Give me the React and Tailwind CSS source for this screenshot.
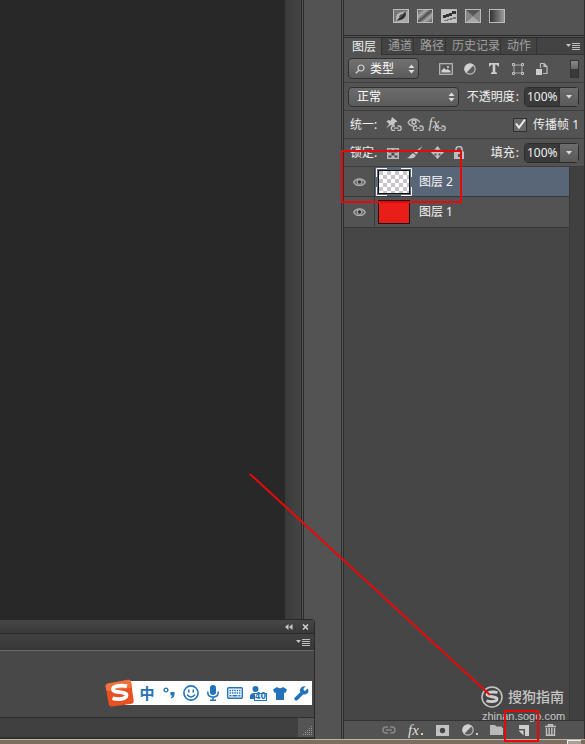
import React from "react";

const FONT = "font-['Noto_Sans','Noto_Sans_CJK_SC',sans-serif]";

function Icon({ w, h, className = "", children }) {
  return (
    <svg width={w} height={h} viewBox={`0 0 ${w} ${h}`} className={`block shrink-0 ${className}`} aria-hidden="true">
      {children}
    </svg>
  );
}

function IconButton({ label, className = "", children }) {
  return (
    <button type="button" aria-label={label} className={`flex h-5 shrink-0 items-center justify-center ${className}`}>
      {children}
    </button>
  );
}

function Updown() {
  return (
    <Icon w={7} h={10}>
      <path d="M3.5 0.5 6.5 4h-6zM3.5 9.5 6.5 6h-6z" fill="#ddd" />
    </Icon>
  );
}

function MenuIcon() {
  return (
    <Icon w={14} h={9}>
      <path d="M0 2h5L2.5 5z" fill="#c4c4c4" />
      <path d="M6 1.5h8M6 3.5h8M6 5.5h8M6 7.5h8" stroke="#bdbdbd" strokeWidth="1" />
    </Icon>
  );
}

function ChainLink() {
  return (
    <path
      d="M10 9H8.500a2.200 2.200 0 0 0 0 4.400H10M12.500 9H14a2.200 2.200 0 0 1 0 4.400h-1.500M9 11.200h4.500"
      fill="none"
      stroke="#c0c0c0"
      strokeWidth="1.300"
    />
  );
}

function HalfCircle() {
  return (
    <Icon w={12} h={12}>
      <circle cx="6" cy="6" r="5.2" fill="#5c5c5c" stroke="#bdbdbd" strokeWidth="1.2" />
      <path d="M2.100 9.900A5.500 5.500 0 0 1 9.900 2.100z" fill="#d0d0d0" />
    </Icon>
  );
}

function AdjustmentIcon({ kind }) {
  return (
    <Icon w={16} h={14}>
      <defs>
        <linearGradient id="diag" x1="0" y1="0" x2="1" y2="1">
          <stop offset="0" stopColor="#555" />
          <stop offset=".3" stopColor="#aaa" />
          <stop offset=".5" stopColor="#4c4c4c" />
          <stop offset=".7" stopColor="#aaa" />
          <stop offset="1" stopColor="#5a5a5a" />
        </linearGradient>
        <linearGradient id="flat">
          <stop offset="0" stopColor="#333" />
          <stop offset="1" stopColor="#999" />
        </linearGradient>
      </defs>
      <rect x=".5" y=".5" width="15" height="13" fill="#555" />
      {kind === "反相" && (
        <>
          <path d="M1 1h14L1 13z" fill="#777" />
          <path d="M15 1v12H1z" fill="#a8a8a8" />
          <path d="M12 2 3.500 11.500C2 7 5 3 9.500 3z" fill="#b8b8b8" />
          <path d="M3.500 11.500 12.500 3c2 4.500-3 9-9 8.500z" fill="#303030" />
          <path d="M6 8.500C6 6 8 4.800 10 5z" fill="#444" />
        </>
      )}
      {kind === "色调分离" && <rect x="1" y="1" width="14" height="12" fill="url(#diag)" />}
      {kind === "阈值" && (
        <>
          <rect x="1" y="1" width="14" height="12" fill="#c2c2c2" />
          <path d="M15 2h-4v2H8v1H5v1H2v3h3V8h3V7h3V5h4z" fill="#333" />
          <path d="M15 8h-3v1H9v1H6v1H3v1h4v-1h4v-1h4z" fill="#777" />
        </>
      )}
      {kind === "可选颜色" && (
        <>
          <path d="m1 1 7 6 7-6z" fill="#555" />
          <path d="m1 13 7-6 7 6z" fill="#a8a8a8" />
          <path d="m1 1 7 6-7 6z" fill="#858585" />
          <path d="m15 1-7 6 7 6z" fill="#858585" />
        </>
      )}
      {kind === "渐变映射" && <rect x="1" y="1" width="14" height="12" fill="url(#flat)" />}
      <rect x=".5" y=".5" width="15" height="13" fill="none" stroke="#bbb" />
    </Icon>
  );
}

function Eye() {
  return (
    <Icon w={13} h={10}>
      <path d="M.6 5.2C3 .8 10 .8 12.4 5.2 10 9.6 3 9.6.6 5.2z" fill="#6a6a6a" stroke="#b2b2b2" strokeWidth="1.2" />
      <circle cx="6.5" cy="4.8" r="2.8" fill="#aaa" />
      <circle cx="6.5" cy="5" r="1.7" fill="#333" />
    </Icon>
  );
}

function PercentField({ id, label }) {
  return (
    <div className="flex items-center text-[#eee]">
      <label htmlFor={id} className="mr-[2px] whitespace-nowrap">
        {label}<span className="ml-px mr-[3px]">:</span>
      </label>
      <div className="flex h-5 w-[55px] rounded-sm border border-[#2b2b2b]">
        <input id={id} defaultValue="100%" className="w-[34px] min-w-0 bg-[#3a3a3a] pl-[2px] text-[12px] text-[#eee] outline-none" />
        <button type="button" aria-label={`${label}选项`} className="flex flex-1 items-center justify-center border-l border-[#333] bg-linear-to-b from-[#6c6c6c] to-[#5a5a5a]">
          <Icon w={7} h={4}><path d="M0 0h6L3 3.5z" fill="#ddd" /></Icon>
        </button>
      </div>
    </div>
  );
}

function LayerRow({ name, selected, children }) {
  return (
    <li className={`flex border-b border-[#383838] ${selected ? "h-[30px] bg-[#596678]" : "h-[31px] bg-[#535353]"}`}>
      <button type="button" aria-label={`切换${name}可见性`} className="flex w-[31px] items-center justify-center border-r border-[#3b3b3b] bg-[#535353]">
        <Eye />
      </button>
      <div className="ml-px flex items-center">{children}</div>
      <button type="button" className="ml-[7px] flex-1 text-left text-[#f5f5f5]">{name}</button>
    </li>
  );
}

const row = "flex h-7 shrink-0 items-center border-b border-[#3d3d3d] pl-1 pr-[5px]";

function LayersPanel() {
  return (
    <aside className="flex w-[244px] shrink-0 flex-col border-r border-[#2f2f2f] border-l-3 [border-left-style:double] bg-[#535353]">
      <div className="flex h-[38px] shrink-0 gap-2 border-b-3 border-double border-[#2b2b2b] pl-[49px] pt-[9px]">
        {["反相", "色调分离", "阈值", "可选颜色", "渐变映射"].map((k) => (
          <button key={k} type="button" aria-label={k} className="h-[14px]"><AdjustmentIcon kind={k} /></button>
        ))}
      </div>

      <div role="tablist" className="flex h-[17px] shrink-0 items-stretch bg-[#434343] text-left text-[#a0a0a0]">
        <button role="tab" aria-selected="true" className="w-[38px] border-r border-[#303030] bg-[#535353] pl-2 text-left text-[#eee]">图层</button>
        <button role="tab" aria-selected="false" className="w-[32px] border-b border-r border-[#333] pl-[6px] text-left">通道</button>
        <button role="tab" aria-selected="false" className="w-8 border-b border-r border-[#333] pl-[6px] text-left">路径</button>
        <button role="tab" aria-selected="false" className="w-[55px] border-b border-r border-[#333] pl-[6px] text-left">历史记录</button>
        <button role="tab" aria-selected="false" className="w-9 border-b border-r border-[#333] pl-[6px] text-left">动作</button>
        <button type="button" aria-label="面板菜单" className="flex flex-1 items-center justify-end border-b border-[#333] pr-1"><MenuIcon /></button>
      </div>

      <div className={row}>
        <div className="relative flex h-[21px] w-[71px] items-center rounded-sm border border-[#303030] bg-linear-to-b from-[#727272] to-[#5b5b5b]">
          <select aria-label="滤镜类型" className="h-full w-full appearance-none bg-transparent pl-[21px] text-[12px] text-white outline-none">
            <option>类型</option>
          </select>
          <span className="pointer-events-none absolute left-[6px]">
            <Icon w={10} h={10}>
              <circle cx="6" cy="4" r="3" fill="none" stroke="#d0d0d0" strokeWidth="1.2" />
              <path d="M4 6.3.8 9.3" stroke="#d0d0d0" strokeWidth="1.5" />
            </Icon>
          </span>
          <span className="pointer-events-none absolute right-[3px]"><Updown /></span>
        </div>
        <div className="ml-[15px] flex items-center">
          <IconButton label="像素图层" className="w-6">
            <Icon w={14} h={12}>
              <rect x=".7" y=".7" width="12.6" height="10.6" fill="#555" stroke="#bbb" strokeWidth="1.2" />
              <path d="M2.5 9.5V7.5L5 5l2 2 1.5-1 3 2v1.5z" fill="#d5d5d5" />
              <rect x="8" y="3" width="2" height="2" fill="#bbb" />
            </Icon>
          </IconButton>
          <IconButton label="调整图层" className="w-6"><HalfCircle /></IconButton>
          <IconButton label="文字图层" className="w-6">
            <Icon w={10} h={11}><path d="M0 0h10v3.5H9Q8.700 1.500 6.300 1.500V9l1.700.7V11H2V9.700L3.700 9V1.500Q1.300 1.500 1 3.500H0z" fill="#ccc" /></Icon>
          </IconButton>
          <IconButton label="形状图层" className="w-6">
            <Icon w={12} h={12}>
              <path d="M2 2h8v8H2z" fill="none" stroke="#aaa" />
              <path d="M.5.5h2v2h-2zM9.500.5h2v2h-2zM.5 9.500h2v2h-2zM9.500 9.500h2v2h-2z" fill="#535353" stroke="#c5c5c5" />
            </Icon>
          </IconButton>
          <IconButton label="智能对象" className="w-6">
            <Icon w={12} h={12}>
              <path d="M4.500 5V.5H8L11 3.500v7H7M8 .5v3h3" fill="none" stroke="#bbb" strokeWidth="1.200" />
              <rect x="0" y="6" width="6" height="6" fill="#ccc" />
            </Icon>
          </IconButton>
        </div>
        <button type="button" aria-label="启用滤镜" className="ml-auto h-[18px] w-[9px] border border-[#333] bg-[#3a3a3a]">
          <span className="-mt-2 block h-2 bg-linear-to-b from-[#8a8a8a] to-[#666]" />
        </button>
      </div>

      <div className={`${row} justify-between`}>
        <div className="relative flex h-5 w-[111px] items-center rounded-sm border border-[#303030] bg-linear-to-b from-[#6c6c6c] to-[#5b5b5b]">
          <select aria-label="混合模式" className="h-full w-full appearance-none bg-transparent pl-2 text-[12px] text-white outline-none">
            <option>正常</option>
          </select>
          <span className="pointer-events-none absolute right-[3px]"><Updown /></span>
        </div>
        <PercentField id="opacity" label="不透明度" />
      </div>

      <div className={`${row} text-[#eee]`}>
        <span className="w-[34px] pl-[2px]">统一:</span>
        <IconButton label="统一图层位置" className="w-[22px]">
          <Icon w={17} h={15}>
            <path d="m7 0 5.500 4.500-2 .8L9.200 7 9 8.500H7L5.500 8 1 11.500 4.200 7 1.500 4.500 3 3.200l3 .3z" fill="#c6c6c6" />
            <ChainLink />
          </Icon>
        </IconButton>
        <IconButton label="统一图层可见性" className="w-[22px]">
          <Icon w={17} h={15}>
            <path d="M1 5.500C4 .8 10 .8 13 5.500M1 5.500C2 7.500 4 8.800 6 9" fill="none" stroke="#bdbdbd" strokeWidth="1.300" />
            <circle cx="7" cy="5" r="2.700" fill="#bbb" /><circle cx="7" cy="5" r="1.100" fill="#444" />
            <ChainLink />
          </Icon>
        </IconButton>
        <IconButton label="统一图层样式" className="w-[22px]">
          <span className="relative h-[15px] w-[17px]">
            <span className="absolute left-0 top-0 font-['Liberation_Serif',serif] text-[15px] italic leading-3 text-[#d0d0d0]">fx</span>
            <span className="absolute left-0 top-0"><Icon w={17} h={15}><ChainLink /></Icon></span>
          </span>
        </IconButton>
        <label className="ml-auto flex items-center gap-[6px]">
          <span className="relative h-[14px] w-[14px]">
            <input type="checkbox" defaultChecked className="block h-[14px] w-[14px] appearance-none border border-[#303030] bg-[#686868]" />
            <span className="pointer-events-none absolute left-[1px] top-0"><Icon w={13} h={12}><path d="m2 5.500 3 4L11 1.500" fill="none" stroke="#eee" strokeWidth="2" /></Icon></span>
          </span>
          <span className="whitespace-nowrap">传播帧 1</span>
        </label>
      </div>

      <div className={`${row} text-[#eee]`}>
        <span className="w-[34px] pl-[2px]">锁定:</span>
        <IconButton label="锁定透明像素" className="w-[22px]">
          <Icon w={12} h={12}>
            <path d="M0 1h12v11H0z" fill="#b8b8b8" />
            <path d="M1.500 2.500h3v3h-3zM7.500 2.500h3v3h-3zM4.500 5.500h3v3h-3zM1.500 8.500h3v2h-3zM7.500 8.500h3v2h-3z" fill="#484848" />
          </Icon>
        </IconButton>
        <IconButton label="锁定图像像素" className="w-[22px]">
          <Icon w={16} h={13}><path d="M15.500 0 9.500 8.500 7 6.500zM6.300 7.300l2.500 2C8 12.500 4 13 0 12c3-.5 3.500-4.500 6.300-4.700z" fill="#c4c4c4" /></Icon>
        </IconButton>
        <IconButton label="锁定位置" className="w-[22px]">
          <Icon w={13} h={13}><path d="m6.500 0 3 3.500h-2v2h2v-2L13 6.500l-3.500 3v-2h-2v2h2l-3 3.500-3-3.500h2v-2h-2v2L0 6.500l3.500-3v2h2v-2h-2z" fill="#c2c2c2" /></Icon>
        </IconButton>
        <IconButton label="锁定全部" className="w-[22px]">
          <Icon w={10} h={13}>
            <path d="M2 6V3.500a3 3 0 0 1 6 0V6" fill="none" stroke="#bdbdbd" strokeWidth="1.700" />
            <path d="M0 5.500h10V13H0z" fill="#bdbdbd" /><path d="M4 8h2v3H4z" fill="#555" />
          </Icon>
        </IconButton>
        <div className="ml-auto"><PercentField id="fill" label="填充" /></div>
      </div>

      <div className="flex min-h-0 flex-1 bg-[#464646]">
        <ul className="flex-1">
          <LayerRow name="图层 2" selected>
            <Icon w={36} h={28}>
              <defs>
                <pattern id="checker" width="8" height="8" patternUnits="userSpaceOnUse" x="3" y="3">
                  <rect width="8" height="8" fill="#fff" />
                  <path d="M0 0h4v4H0zM4 4h4v4H4z" fill="#c9c5cb" />
                </pattern>
              </defs>
              <rect x="2.500" y="2.500" width="31" height="23" fill="url(#checker)" stroke="#141414" />
              <path d="M.5 9V.5H11M25 .5h10.500V9M35.500 19v8.500H25M11 27.500H.5V19" fill="none" stroke="#fff" strokeWidth="1" />
            </Icon>
          </LayerRow>
          <LayerRow name="图层 1">
            <span className="mx-[2px] h-6 w-8 border border-[#151515] bg-[#e91e18]" />
          </LayerRow>
        </ul>
        <div className="w-[15px] border-l border-[#383838] bg-[#404040]" />
      </div>

      <div className="flex h-[19px] shrink-0 items-center border-t border-[#333] bg-[#535353] pl-[31px]">
        <IconButton label="链接图层" className="w-[27px]">
          <Icon w={14} h={8}><path d="M6 1H4a3 3 0 0 0 0 6h2M8 1h2a3 3 0 0 1 0 6H8M4 4h6" fill="none" stroke="#888" strokeWidth="1.500" /></Icon>
        </IconButton>
        <IconButton label="图层样式" className="w-[27px]">
          <span className="font-['Liberation_Serif',serif] text-[15px] italic leading-4 text-[#ddd]">fx</span>
          <span className="ml-[2px] mt-2 h-[2px] w-[2px] bg-[#ccc]" />
        </IconButton>
        <IconButton label="添加蒙版" className="w-[27px]">
          <Icon w={13} h={11}><path d="M0 0h13v11H0z" fill="#c2c2c2" /><circle cx="6.500" cy="5.500" r="2.700" fill="#444" /></Icon>
        </IconButton>
        <IconButton label="新建调整图层" className="w-[27px]">
          <HalfCircle /><span className="ml-[2px] mt-2 h-[2px] w-[2px] bg-[#ccc]" />
        </IconButton>
        <IconButton label="新建组" className="w-[27px]">
          <Icon w={13} h={10}><path d="M0 0h5l1.500 1.500H12V3H0zM0 3h13v7H0z" fill="#b9b9b9" /></Icon>
        </IconButton>
        <IconButton label="新建图层" className="w-[27px]">
          <Icon w={11} h={11}><path d="M1 0h10v11H7V4H1z" fill="#ccc" /><path d="M.5 5.500h5V10.500z" fill="#d0d0d0" /></Icon>
        </IconButton>
        <IconButton label="删除图层" className="w-[27px]">
          <Icon w={11} h={12}>
            <path d="M0 2.500h11M3.500 2V.7h4V2" fill="none" stroke="#c2c2c2" strokeWidth="1.400" />
            <path d="M1.500 4v7.300h8V4M4.200 4v7M6.800 4v7" fill="none" stroke="#c2c2c2" strokeWidth="1.400" />
          </Icon>
        </IconButton>
      </div>
    </aside>
  );
}

function InputMethodBar() {
  return (
    <div className="flex h-7 items-center">
      <Icon w={29} h={28} className="z-10 -mr-[9px]">
        <path d="M3 4.500 23 .7q2.500-.4 3 2l2.700 19q.3 2.500-2 3L7 27.500q-2.500.5-3.200-2L.7 8Q0 5 3 4.500z" fill="#e95022" />
        <path d="M3 4.500 23 .7q2.500-.4 3 2l.8 6L1.500 12 .7 8Q0 5 3 4.500z" fill="#f0713a" />
        <path d="M22 7.300c-5-1.300-14-.8-14 3 0 4.200 13.500 1.500 13.500 6 0 4-9 4.500-14 3" fill="none" stroke="#fff" strokeWidth="3.800" />
      </Icon>
      <div className="flex h-6 w-[187px] items-center bg-white pl-[11px] text-[#2273b9]">
        <IconButton label="中文输入" className="w-[22px]">
          <span className="font-['Noto_Sans_CJK_SC',sans-serif] text-[15px] font-bold leading-5">中</span>
        </IconButton>
        <IconButton label="标点" className="w-[22px]">
          <Icon w={12} h={12}><circle cx="3" cy="3" r="1.900" fill="none" stroke="#2273b9" strokeWidth="1.400" /><path d="M7.500 5h4v2.500Q11 11 8 11.500V10q1.200-.5 1.400-1.500H7.500z" fill="#2273b9" /></Icon>
        </IconButton>
        <IconButton label="表情" className="w-[22px]">
          <Icon w={16} h={16}><circle cx="8" cy="8" r="7.100" fill="none" stroke="#2273b9" strokeWidth="1.600" /><path d="M5 4.500v3h1.500v-3zM9.500 4.500v3H11v-3z" fill="#2273b9" /><path d="M4 9.500q4 5 8 0" fill="none" stroke="#2273b9" strokeWidth="1.400" /></Icon>
        </IconButton>
        <IconButton label="语音" className="w-[22px]">
          <Icon w={12} h={16}><rect x="3" y="0" width="6" height="10" rx="3" fill="#2273b9" /><path d="M.8 6.500v1q0 4.500 5.200 4.500t5.200-4.500v-1M6 12v3M3 15.200h6" fill="none" stroke="#2273b9" strokeWidth="1.500" /></Icon>
        </IconButton>
        <IconButton label="软键盘" className="w-[22px]">
          <Icon w={16} h={12}><rect x=".7" y=".7" width="14.6" height="10.6" rx="1" fill="#fff" stroke="#2273b9" strokeWidth="1.400" /><path d="M2.500 3.500h11M2.500 6h11" stroke="#2273b9" strokeWidth="1.500" strokeDasharray="1.500 .9" /><path d="M2.500 8.700h2M5.500 8.700h5M11.500 8.700h2" stroke="#2273b9" strokeWidth="1.500" /></Icon>
        </IconButton>
        <IconButton label="账户等级" className="w-[24px]">
          <span className="relative h-4 w-[18px]">
            <Icon w={18} h={16}><circle cx="6.500" cy="4" r="3" fill="#2273b9" /><path d="M1 14V11q0-3 5-3 4 0 5 2v4z" fill="#2273b9" /></Icon>
            <span className="absolute bottom-0 right-0 h-2 w-[13px] border border-[#2273b9] bg-white text-center font-['DejaVu_Sans',sans-serif] text-[8px] font-bold leading-[6px]">40</span>
          </span>
        </IconButton>
        <IconButton label="皮肤" className="w-[20px]">
          <Icon w={14} h={14}><path d="M4 1q3 2.500 6 0l4 2.500L12.500 7 11 6.500V14H3V6.500L1.500 7 0 3.500z" fill="#2273b9" /></Icon>
        </IconButton>
        <IconButton label="工具箱" className="w-[22px]">
          <Icon w={15} h={15}><path d="M13.300 2.500 11 5 9.500 4 9.800 2l2-1.500Q8.500-.5 6.800 2T6.500 6L.8 11.500q-1 1.500 0 2.500t2.500.2L9.200 8.500Q12 9 13.700 7t-.4-4.500z" fill="#2273b9" /></Icon>
        </IconButton>
      </div>
    </div>
  );
}

function FloatingPanel() {
  return (
    <section className="absolute bottom-[5px] left-0 flex h-[120px] w-[315px] flex-col rounded-tr-sm border-r border-t border-[#292929] bg-[#484848]">
      <header className="flex h-[14px] items-center justify-end gap-[9px] border-b border-[#292929] bg-linear-to-b from-[#464646] to-[#393939] pr-[5px]">
        <button type="button" aria-label="折叠"><Icon w={8} h={6}><path d="M3.500 0v6L0 3zM7.500 0v6L4 3z" fill="#c9c9c9" /></Icon></button>
        <button type="button" aria-label="关闭"><Icon w={7} h={6}><path d="m1 .5 5 5M6 .5l-5 5" stroke="#d1d1d1" strokeWidth="1.500" /></Icon></button>
      </header>
      <div className="flex h-[17px] items-center justify-end border-b border-[#696969] bg-linear-to-b from-[#414141] to-[#373737] pr-1">
        <button type="button" aria-label="面板菜单"><MenuIcon /></button>
      </div>
      <div className="flex flex-1 items-start justify-end pr-[2px] pt-[28px]"><InputMethodBar /></div>
      <footer className="flex h-[22px] justify-end border-b-2 border-t border-[#303030] bg-[#404040]">
        <div className="flex w-4 items-end justify-end bg-[#545454] p-px">
          <Icon w={11} h={11}>
            <path d="M9 1.500h1M7 3.500h3M5 5.500h5M3 7.500h7M1 9.500h9" stroke="#999" strokeDasharray="1 1" />
          </Icon>
        </div>
      </footer>
    </section>
  );
}

function Watermark() {
  return (
    <a href="#zhinan" className="absolute bottom-[20px] right-[19px] w-[85px] text-[#c5c5c5]">
      <span className="flex items-center gap-[5px]">
        <Icon w={22} h={22}>
          <circle cx="11" cy="11" r="10" fill="none" stroke="#c5c5c5" strokeWidth="1.500" />
          <path d="M16.500 6.500C12 5.500 6 6 6 8.600c0 3 10 1.300 10 4.300 0 2.800-6 3.300-10.500 2" fill="none" stroke="#d0d0d0" strokeWidth="2.800" />
        </Icon>
        <span className="whitespace-nowrap text-[14px] font-medium leading-[22px]">搜狗指南</span>
      </span>
      <span className="block pl-px font-['Liberation_Sans',sans-serif] text-[11px] leading-4">zhinan.sogo.com</span>
    </a>
  );
}

export default function App() {
  return (
    <div className={`relative flex min-h-screen flex-col overflow-hidden bg-[#282828] text-[12px] leading-4 ${FONT}`}>
      <div className="flex flex-1">
        <main className="flex-1 bg-[#282828]" />
        <div className="w-4 bg-linear-to-r from-[#3a3a3a] to-[#454545]" />
        <div className="w-[40px] border-l-3 border-double border-[#2b2b2b] bg-[#535353]" />
        <LayersPanel />
      </div>
      <div className="flex h-[5px] shrink-0 border-t border-[#c0b4a5] bg-[#7b6d61]">
        <div className="ml-auto mr-1 w-[14px] border-l border-t border-[#eee] bg-[#a9a097]" />
      </div>
      <FloatingPanel />
      <Watermark />
      <svg width="336" height="592" viewBox="249 150 336 592" className="pointer-events-none absolute bottom-[2px] right-0" aria-hidden="true">
        <g fill="none" stroke="#e90808" strokeWidth="2">
          <path d="M342 151h119v51H342zM505 711h33v30h-33z" />
          <path d="m250 474 240 221" />
        </g>
      </svg>
    </div>
  );
}
